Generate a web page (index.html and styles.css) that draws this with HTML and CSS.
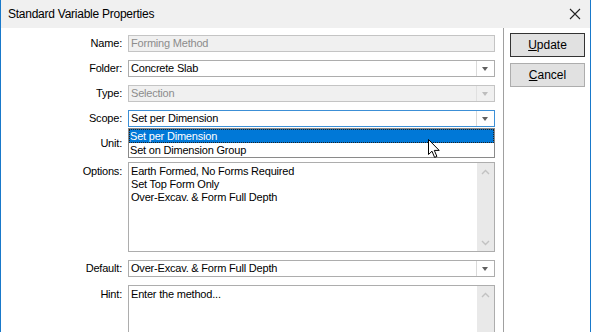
FILE: index.html
```html
<!DOCTYPE html>
<html lang="en">
<head>
    <meta charset="UTF-8">
    <title>Standard Variable Properties</title>
    <link rel="stylesheet" href="styles.css">
</head>
<body>
    <div class="window">
        <div class="title-bar">
            <span class="title">Standard Variable Properties</span>
            <svg class="close" width="12" height="12" viewBox="0 0 12 12">
                <path d="M1 1L11 11M11 1L1 11" stroke="#222" stroke-width="1.1" fill="none"/>
            </svg>
        </div>
        <div class="content">
            <div class="form">
                <label class="label">Name:</label>
                <div class="field disabled">Forming Method</div>

                <label class="label">Folder:</label>
                <div class="field combo">
                    <span class="value">Concrete Slab</span>
                    <span class="arrow"></span>
                </div>

                <label class="label">Type:</label>
                <div class="field combo disabled">
                    <span class="value">Selection</span>
                    <span class="arrow"></span>
                </div>

                <label class="label">Scope:</label>
                <div class="field combo focused">
                    <span class="value">Set per Dimension</span>
                    <span class="arrow"></span>
                    <div class="dropdown">
                        <div class="dropdown-item active">Set per Dimension</div>
                        <div class="dropdown-item">Set on Dimension Group</div>
                        <svg class="cursor" width="14" height="20" viewBox="0 0 14 20">
                            <path d="M0.5 0.5V15.5L4 12.2L6.6 18.4L8.9 17.4L6.3 11.4H11.2Z" fill="#fff" stroke="#000" stroke-width="1"/>
                        </svg>
                    </div>
                </div>

                <label class="label">Unit:</label>
                <div class="field combo">
                    <span class="value"></span>
                    <span class="arrow"></span>
                </div>

                <label class="label top">Options:</label>
                <div class="field area options">
                    <div class="area-text">
                        <div>Earth Formed, No Forms Required</div>
                        <div>Set Top Form Only</div>
                        <div>Over-Excav. &amp; Form Full Depth</div>
                    </div>
                    <div class="scrollbar">
                        <svg width="9" height="6" viewBox="0 0 9 6"><path d="M1 5L4.5 1.5L8 5" stroke="#c2c2c2" stroke-width="1.4" fill="none"/></svg>
                        <svg width="9" height="6" viewBox="0 0 9 6"><path d="M1 1L4.5 4.5L8 1" stroke="#c2c2c2" stroke-width="1.4" fill="none"/></svg>
                    </div>
                </div>

                <label class="label">Default:</label>
                <div class="field combo">
                    <span class="value">Over-Excav. &amp; Form Full Depth</span>
                    <span class="arrow"></span>
                </div>

                <label class="label top hint-label">Hint:</label>
                <div class="field area hint">
                    <div class="area-text">
                        <div>Enter the method...</div>
                    </div>
                    <div class="scrollbar">
                        <svg width="9" height="6" viewBox="0 0 9 6"><path d="M1 5L4.5 1.5L8 5" stroke="#c2c2c2" stroke-width="1.4" fill="none"/></svg>
                    </div>
                </div>
            </div>
            <div class="buttons">
                <button class="btn default"><u>U</u>pdate</button>
                <button class="btn"><u>C</u>ancel</button>
            </div>
        </div>
    </div>
</body>
</html>
```

FILE: styles.css
```css
body {
    margin: 0;
    width: 592px;
    height: 332px;
    overflow: hidden;
    background: #ffffff;
    font-family: Tahoma, 'Liberation Sans', 'DejaVu Sans', sans-serif;
    font-size: 11px;
    letter-spacing: -0.2px;
    color: #000;
}
.window {
    width: 591px;
    height: 332px;
    box-sizing: border-box;
    border-left: 1px solid #1979ca;
    border-right: 1px solid #1979ca;
    background: #fff;
}
.title-bar {
    height: 28px;
    background: #f0f0f0;
    display: flex;
    align-items: center;
    justify-content: space-between;
    padding: 0 8px 0 7px;
}
.title {
    font-family: 'Segoe UI', 'Liberation Sans', sans-serif;
    font-size: 12px;
    letter-spacing: -0.25px;
    color: #000;
    margin-top: -1px;
}
.close {
    margin-right: 1px;
}
.content {
    display: flex;
    height: 304px;
}
.form {
    width: 502px;
    display: grid;
    grid-template-columns: 121px 367px;
    grid-template-rows: repeat(5, 17px) 92px 17px 1fr;
    column-gap: 6px;
    row-gap: 8px;
    padding-top: 7px;
    box-sizing: border-box;
}
.label {
    text-align: right;
    line-height: 17px;
    color: #000;
}
.label.top {
    line-height: 13px;
    padding-top: 5px;
}
.label.hint-label {
    padding-top: 3px;
}
.field {
    position: relative;
    box-sizing: border-box;
    border: 1px solid #adadad;
    background: #fff;
    height: 17px;
    line-height: 15px;
    padding-left: 2px;
    white-space: nowrap;
}
.field.disabled {
    background: #f0f0f0;
    color: #8c8c8c;
    border-color: #c4c4c4;
}
.combo {
    display: flex;
    padding-left: 0;
}
.combo .value {
    flex: 1;
    padding-left: 2px;
}
.combo .arrow {
    width: 17px;
    border-left: 1px solid #dadada;
    position: relative;
}
.combo .arrow::after {
    content: "";
    position: absolute;
    left: 5px;
    top: 6px;
    border-left: 3.5px solid transparent;
    border-right: 3.5px solid transparent;
    border-top: 4px solid #606060;
}
.combo.disabled .arrow {
    border-left-color: #e0e0e0;
}
.combo.disabled .arrow::after {
    border-top-color: #bdbdbd;
}
.combo.focused {
    border-color: #3c8fd6;
}
.dropdown {
    position: absolute;
    left: -1px;
    right: -1px;
    top: 17px;
    background: #fff;
    border: 1px solid #8a8a8a;
    z-index: 2;
}
.dropdown-item {
    height: 14px;
    line-height: 14px;
    padding-left: 1px;
}
.dropdown-item.active {
    background: #0078d7;
    color: #fff;
    outline: 1px dotted #222;
    outline-offset: -1px;
}
.cursor {
    position: absolute;
    left: 299px;
    top: 10px;
}
.area {
    display: flex;
    padding-left: 0;
    white-space: normal;
}
.area-text {
    flex: 1;
    padding: 2px 0 0 2px;
    line-height: 13px;
}
.scrollbar {
    width: 17px;
    background: #e9e9e9;
    display: flex;
    flex-direction: column;
    justify-content: space-between;
    align-items: center;
    padding: 6px 0 5px;
    box-sizing: border-box;
}
.options {
    height: 90px;
    margin-top: 2px;
}
.hint {
    height: auto;
    border-bottom: none;
}
.buttons {
    flex: 1;
    border-left: 1px solid #a0a0a0;
    display: flex;
    flex-direction: column;
    gap: 6px;
    padding: 5px 0 0 6px;
}
.btn {
    width: 75px;
    height: 24px;
    box-sizing: border-box;
    background: #e1e1e1;
    border: 1px solid #adadad;
    font-family: Tahoma, 'Liberation Sans', 'DejaVu Sans', sans-serif;
    font-size: 12px;
    color: #000;
    padding: 0;
}
.btn.default {
    border-color: #333;
}
```
